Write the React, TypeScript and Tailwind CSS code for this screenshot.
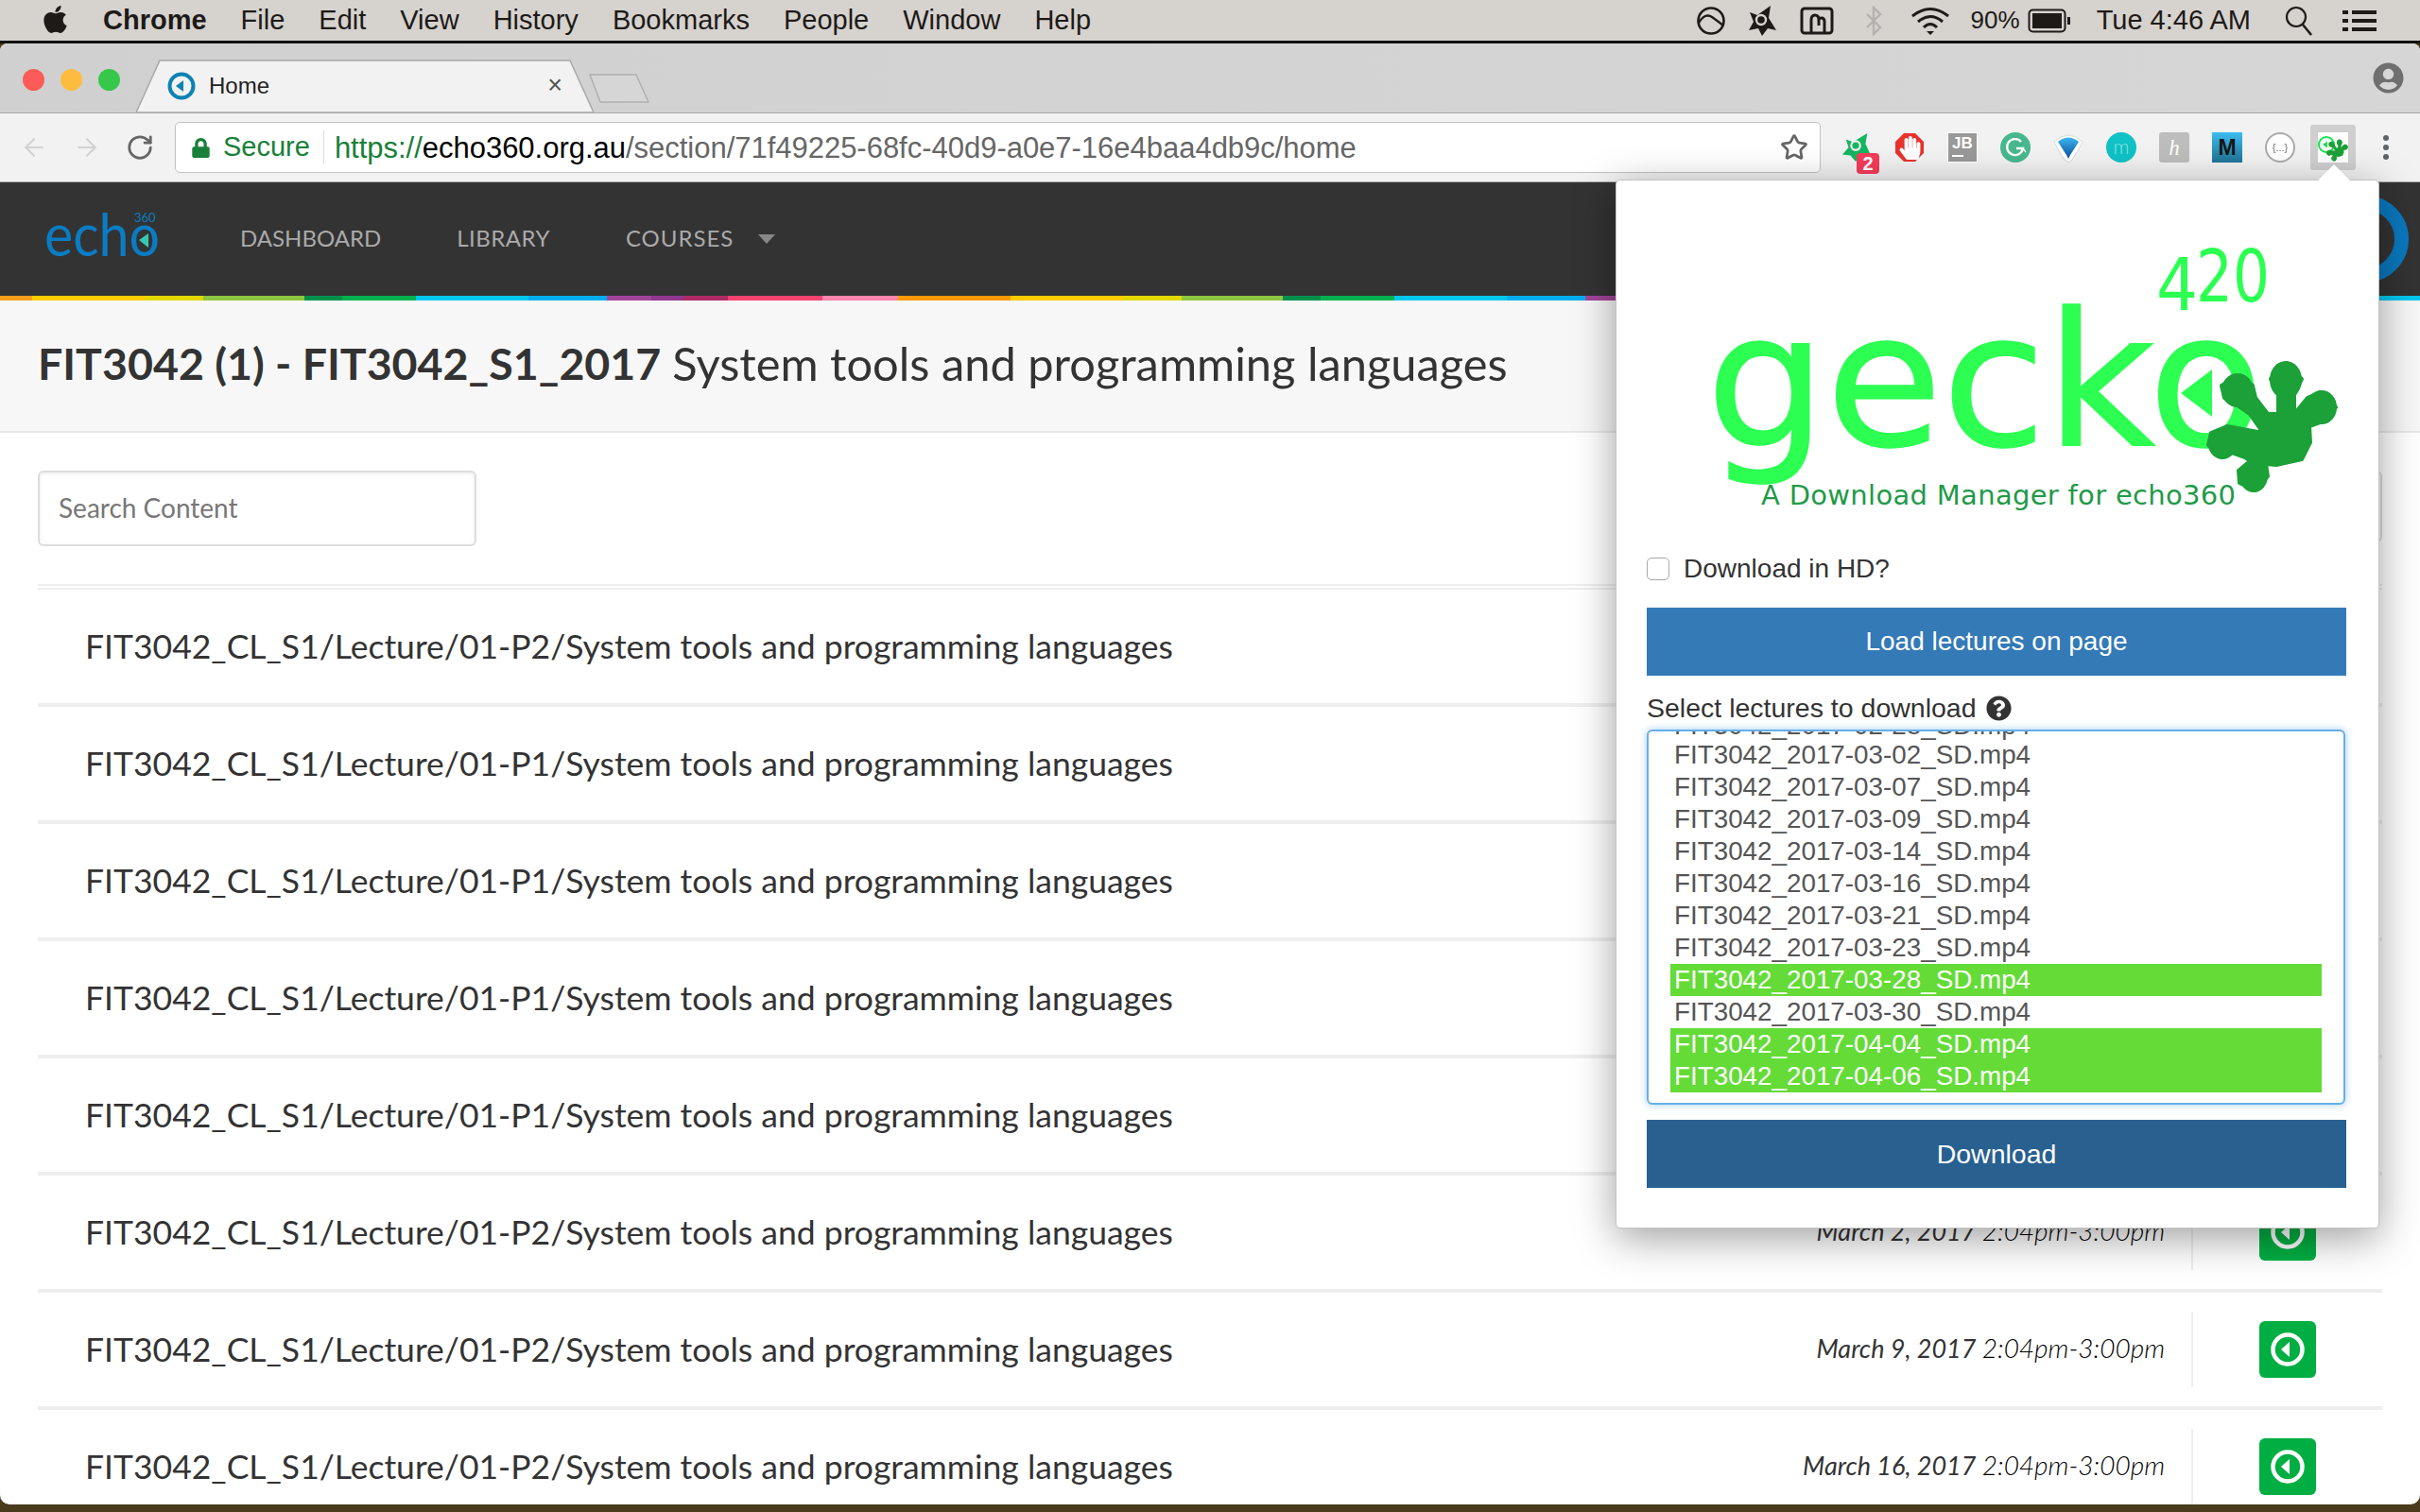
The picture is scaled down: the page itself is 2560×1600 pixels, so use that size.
import { ArrowLeft, ArrowRight, RotateCw, Star } from 'lucide-react'
import { FaApple, FaHandPaper, FaLock, FaQuestionCircle, FaUserCircle } from 'react-icons/fa'

const sans = 'font-["Liberation_Sans",Arial,sans-serif]'

const menuItems = ['File', 'Edit', 'View', 'History', 'Bookmarks', 'People', 'Window', 'Help']

const rainbow = [
  ['w-[34px]', 'bg-[#f99d1c]'],
  ['w-[120px]', 'bg-[#fecb00]'],
  ['w-[61px]', 'bg-[#e2d800]'],
  ['w-[107px]', 'bg-[#8dc63f]'],
  ['w-[40px]', 'bg-[#00904c]'],
  ['w-[78px]', 'bg-[#00b14f]'],
  ['w-[119px]', 'bg-[#00c8f0]'],
  ['w-[83px]', 'bg-[#00aeef]'],
  ['w-[47px]', 'bg-[#a2459a]'],
  ['w-[34px]', 'bg-[#93368f]'],
  ['w-[47px]', 'bg-[#ae2a64]'],
  ['w-[100px]', 'bg-[#f4436f]'],
  ['w-[80px]', 'bg-[#ff85ad]'],
  ['w-[119px]', 'bg-[#ff9900]'],
  ['w-[119px]', 'bg-[#fecb00]'],
  ['w-[62px]', 'bg-[#e2d800]'],
  ['w-[107px]', 'bg-[#8dc63f]'],
  ['w-[40px]', 'bg-[#00904c]'],
  ['w-[78px]', 'bg-[#00b14f]'],
  ['w-[119px]', 'bg-[#00c8f0]'],
  ['w-[83px]', 'bg-[#00aeef]'],
  ['w-[47px]', 'bg-[#a2459a]'],
  ['flex-1', 'bg-[#00c8f0]'],
]

const rows = [
  { part: '01-P2' },
  { part: '01-P1' },
  { part: '01-P1' },
  { part: '01-P1' },
  { part: '01-P1' },
  { part: '01-P2', date: 'March 2, 2017' },
  { part: '01-P2', date: 'March 9, 2017' },
  { part: '01-P2', date: 'March 16, 2017' },
]

const lectures = [
  { date: '2017-02-28' },
  { date: '2017-03-02' },
  { date: '2017-03-07' },
  { date: '2017-03-09' },
  { date: '2017-03-14' },
  { date: '2017-03-16' },
  { date: '2017-03-21' },
  { date: '2017-03-23' },
  { date: '2017-03-28', selected: true },
  { date: '2017-03-30' },
  { date: '2017-04-04', selected: true },
  { date: '2017-04-06', selected: true },
]

// traced from the logo, coordinates are the popup's
function GeckoFoot() {
  return (
    <g fill="#1ca038">
      <polygon
        stroke="#1ca038"
        strokeWidth="4"
        strokeLinejoin="round"
        points="709,193 725,210 717,227 717,247 731,230 744,224 761,240 747,255 733,260 734,277 725,295 698,301 687,300 689,313 676,328 659,320 658,307 670,297 665,293 651,288 640,293 626,280 629,267 646,260 662,263 684,267 670,247 657,238 643,230 640,217 657,207 673,217 676,230 689,247 700,247 700,227 692,210"
      />
      <ellipse cx="708" cy="211" rx="17" ry="20" />
      <ellipse cx="746" cy="240" rx="16" ry="18" />
      <ellipse cx="657" cy="222" rx="17" ry="18" />
      <ellipse cx="641" cy="279" rx="15" ry="16" />
      <ellipse cx="674" cy="313" rx="15" ry="17" />
    </g>
  )
}

function MenuBarIcons() {
  return (
    <div className="flex items-center">
      <svg width="30" height="30" viewBox="0 0 30 30" className="ml-[1px]">
        <circle cx="15" cy="15" r="13.5" fill="none" stroke="#1d1a18" strokeWidth="2.6" />
        <path d="M2 17 Q9 6 16 11 T28 20" fill="none" stroke="#1d1a18" strokeWidth="2.4" />
      </svg>
      <svg width="34" height="34" viewBox="0 0 34 34" className="ml-[21px]">
        <path d="M4 27 L9 18 L5 8 L13 11 L27 1 L25 14 L33 27 L24 25 L18 33 L14 25 Z" fill="#1d1a18" />
        <circle cx="17" cy="16" r="5" fill="none" stroke="#d6d2ce" strokeWidth="2.4" />
      </svg>
      <svg width="36" height="30" viewBox="0 0 36 30" className="ml-[24px]">
        <rect x="2" y="2" width="32" height="26" rx="3" fill="none" stroke="#1d1a18" strokeWidth="3" />
        <path d="M12 28 V14 Q12 9 16 9 Q20 9 20 14 V20 M20 14 Q20 12 23 12 Q26 12 26 16 V28" fill="none" stroke="#1d1a18" strokeWidth="3" />
      </svg>
      <svg width="18" height="32" viewBox="0 0 18 32" className="ml-[33px]">
        <path d="M2 9 L16 23 L9 30 V2 L16 9 L2 23" fill="none" stroke="#b4b1ae" strokeWidth="2.4" />
      </svg>
      <svg width="42" height="30" viewBox="0 0 42 30" className="ml-[30px]">
        <g fill="none" stroke="#1d1a18" strokeWidth="3">
          <path d="M2 10 Q21 -5 40 10" />
          <path d="M8 16 Q21 5 34 16" />
          <path d="M14 22 Q21 15 28 22" />
        </g>
        <path d="M17 26 H25 L21 30 Z" fill="#1d1a18" />
      </svg>
    </div>
  )
}

function ExtensionIcons() {
  return (
    <div className="ml-[22px] flex items-center gap-6">
      {/* avast with its badge */}
      <div className="relative h-8 w-8">
        <svg viewBox="0 0 34 34" className="h-8 w-8">
          <path d="M1 25 L8 17 L5 8 L13 11 L29 1 L27 13 L33 26 L22 25 L16 33 L10 26 Z" fill="#15b560" />
          <circle cx="16" cy="15" r="5" fill="none" stroke="#f2f2f2" strokeWidth="2.4" />
        </svg>
        <span className={`absolute -bottom-3 -right-2 flex h-[22px] w-6 items-center justify-center rounded-sm bg-[#f53c5b] text-[20px] font-bold leading-none text-white ${sans}`}>
          2
        </span>
      </div>
      {/* adblock */}
      <div className="relative flex h-8 w-8 items-center justify-center">
        <svg viewBox="0 0 32 32" className="absolute inset-0">
          <polygon points="10,1 22,1 31,10 31,22 22,31 10,31 1,22 1,10" fill="#e9322d" />
        </svg>
        <FaHandPaper className="relative text-[25px] text-white" />
      </div>
      {/* jetbrains */}
      <div className={`flex h-8 w-8 flex-col border border-white bg-[#999] px-[4px] pt-[2px] text-[17px] font-bold leading-[18px] text-white ${sans}`}>
        JB
        <span className="mt-[3px] h-[2px] w-[12px] bg-white" />
      </div>
      {/* grammarly */}
      <svg viewBox="0 0 32 32" className="h-8 w-8">
        <circle cx="16" cy="16" r="16" fill="#47b88d" />
        <path d="M22 10 A8.5 8.5 0 1 0 24 17 H17" fill="none" stroke="#fff" strokeWidth="2.4" />
        <path d="M22 21 L24 17 L27 21" fill="none" stroke="#fff" strokeWidth="1.5" />
      </svg>
      {/* balloon */}
      <svg viewBox="0 0 32 32" className="h-8 w-8">
        <defs>
          <linearGradient id="balloon" x1="0" y1="0" x2="0" y2="1">
            <stop offset="0" stopColor="#3db5f0" />
            <stop offset="1" stopColor="#0a4f9c" />
          </linearGradient>
        </defs>
        <path d="M1 10 Q16 -4 31 10 Q27 19 20 29 Q16 34 12 29 Q5 19 1 10 Z" fill="#fff" stroke="#cfcfcf" strokeWidth="0.8" />
        <path d="M5 10 Q16 1 27 10 Q22 18 18 24 L16 28 L14 24 Q10 18 5 10 Z" fill="url(#balloon)" />
      </svg>
      {/* mercury */}
      <div className="flex h-8 w-8 items-center justify-center rounded-full bg-[#0ec2c6] pb-[3px] font-[Lato,sans-serif] text-[21px] font-light leading-none text-[#8be4e2]">
        m
      </div>
      {/* keep */}
      <div className="flex h-8 w-8 items-center justify-center rounded-[3px] bg-[#bdbdbd] font-['Liberation_Serif',serif] text-[23px] italic leading-none text-white">
        h
      </div>
      {/* mercury reader */}
      <div className={`flex h-8 w-8 items-center justify-center bg-gradient-to-b from-[#3bbdf0] to-[#1f7396] text-[23px] font-bold leading-none text-[#161616] ${sans}`}>
        M
      </div>
      {/* json viewer */}
      <div className={`flex h-8 w-8 items-center justify-center rounded-full border-2 border-[#aaa] bg-white text-[11px] leading-none text-[#777] ${sans}`}>
        {'{...}'}
      </div>
      {/* gecko, the open one */}
      <div className="relative h-8 w-8">
        <div className="absolute -inset-2 rounded-[3px] bg-[#cfcfcf]" />
        <svg viewBox="0 0 32 32" className="absolute inset-0 bg-white">
          <circle cx="9" cy="13" r="8" fill="none" stroke="#19e34f" strokeWidth="2" />
          <polygon points="5,13 10,9.5 10,16.5" fill="#19e34f" />
          <g transform="translate(-94 -24) scale(0.165)">
            <GeckoFoot />
          </g>
        </svg>
      </div>
      <div className="ml-[13px] flex w-[8px] flex-col gap-[4px]">
        <span className="h-[6px] w-[6px] rounded-full bg-[#5f6368]" />
        <span className="h-[6px] w-[6px] rounded-full bg-[#5f6368]" />
        <span className="h-[6px] w-[6px] rounded-full bg-[#5f6368]" />
      </div>
    </div>
  )
}

function ChromeFrame() {
  return (
    <>
      <div className="relative flex h-[73px] items-end bg-gradient-to-r from-[#d0d0d0] to-[#d6d6d6]">
        <div className="mb-[23px] ml-[24px] flex gap-[17px] self-end">
          <span className="h-[23px] w-[23px] rounded-full bg-[#fc5b57]" />
          <span className="h-[23px] w-[23px] rounded-full bg-[#fdbc40]" />
          <span className="h-[23px] w-[23px] rounded-full bg-[#35c84a]" />
        </div>
        <div className="relative ml-[17px] flex h-[56px] w-[484px] items-center pl-[33px]">
          <svg viewBox="0 0 484 56" className="absolute inset-0">
            <polygon points="0,56 25,1 459,1 484,56" fill="#f2f2f2" stroke="#a8a8a8" strokeWidth="1.5" />
          </svg>
          <svg width="30" height="30" viewBox="0 0 30 30" className="relative">
            <circle cx="15" cy="15" r="12.5" fill="none" stroke="#0d82b4" strokeWidth="4" />
            <polygon points="9,15 17,9 17,21" fill="#0d82b4" />
          </svg>
          <span className={`relative ml-[14px] text-[24px] leading-none text-[#222] ${sans}`}>Home</span>
          <span className={`absolute right-[33px] top-[14px] text-[27px] leading-none text-[#555] ${sans}`}>×</span>
        </div>
        <svg width="64" height="31" viewBox="0 0 64 31" className="-ml-[5px] mb-[10px]">
          <polygon points="1,1 50,1 63,30 12,30" fill="#d6d6d6" stroke="#b0b0b0" strokeWidth="1.5" strokeLinejoin="round" />
        </svg>
        <FaUserCircle className="ml-auto mb-[20px] mr-[17px] text-[33px] text-[#6f6f6f]" />
      </div>

      <div className="flex h-[74px] items-center border-y border-y-[#a8a8a8] bg-[#f2f2f2] pl-[21px]">
        <ArrowLeft className="h-[30px] w-[30px] text-[#d2d2d2]" strokeWidth={1.7} />
        <ArrowRight className="ml-[26px] h-[30px] w-[30px] text-[#d2d2d2]" strokeWidth={1.7} />
        <RotateCw className="ml-[26px] h-[30px] w-[30px] text-[#666]" strokeWidth={2.2} />
        <div className={`ml-[22px] flex h-[54px] w-[1741px] items-center rounded-[5px] border border-[#c2c2c2] bg-white pl-[16px] pr-[12px] text-[29px] ${sans}`}>
          <FaLock className="text-[21px] text-[#188038]" />
          <span className="ml-[13px] text-[#188038]">Secure</span>
          <span className="ml-[14px] h-[36px] w-[1px] bg-[#ddd]" />
          <span className="ml-[11px] whitespace-nowrap pt-[2px] text-[31px] tracking-[-0.02px]">
            <span className="text-[#188038]">https://</span>
            <span className="text-black">echo360.org.au</span>
            <span className="text-[#666]">/section/71f49225-68fc-40d9-a0e7-16e4baa4db9c/home</span>
          </span>
          <Star className="ml-auto h-[30px] w-[30px] text-[#666]" strokeWidth={2.2} />
        </div>
        <ExtensionIcons />
      </div>
    </>
  )
}

function GeckoPopup() {
  return (
    <div className="absolute left-[1709px] top-[144px] h-[1110px] w-[808px] rounded-[5px] border border-[#c4c4c4] bg-white px-[32px] shadow-[0_10px_44px_rgba(0,0,0,0.38)]">
      <div className="absolute -top-[12px] left-[747px] h-6 w-6 rotate-45 bg-white" />
      <svg viewBox="0 0 806 375" className="relative -mx-[32px] block h-[375px] w-[806px] font-['DejaVu_Sans',sans-serif]">
        <text x="95" y="280" fontSize="196" fill="#2cff52" stroke="#2cff52" strokeWidth="1.5" textLength="590" lengthAdjust="spacingAndGlyphs">gecko</text>
        <text x="571" y="137" fontSize="76" fill="#2cff52" textLength="44" lengthAdjust="spacingAndGlyphs">4</text>
        <text x="613" y="128" fontSize="76" fill="#2cff52" textLength="78" lengthAdjust="spacingAndGlyphs">20</text>
        <polygon points="597,225 630,200 630,250" fill="#2cff52" />
        <GeckoFoot />
        <text x="153" y="343" fontSize="29" fill="#1f9a48" textLength="502">A Download Manager for echo360</text>
      </svg>

      <div className={`text-[28px] text-[#333] ${sans}`}>
        <label className="mt-[22px] flex h-[28px] items-center">
          <span className="h-[24px] w-[24px] rounded-[5px] border border-[#a9a9a9] bg-white" />
          <span className="ml-[15px] leading-none">Download in HD?</span>
        </label>

        <div className="mt-[27px] flex h-[72px] w-[740px] items-center justify-center bg-[#337ab7] text-white">
          Load lectures on page
        </div>

        <div className="mt-[19px] flex h-[30px] items-center text-[28.5px]">
          Select lectures to download
          <FaQuestionCircle className="ml-[10px] text-[27px] text-[#333]" />
        </div>

        <div className="mt-[8px] h-[397px] w-[739px] overflow-hidden rounded-[6px] border-2 border-[#66afe9] bg-white pl-[23px] pr-[23px] text-[27.8px] shadow-[0_0_8px_rgba(102,175,233,0.6)]">
          <div className="-mt-[23px]">
            {lectures.map((lecture, i) => (
              <div
                key={lecture.date}
                className={`pl-[4px] leading-[34px] ${i === 0 ? 'h-[31px]' : 'h-[34px]'} ${lecture.selected ? 'bg-[#64db37] text-white' : 'text-[#555]'}`}
              >
                FIT3042_{lecture.date}_SD.mp4
              </div>
            ))}
          </div>
        </div>

        <div className="mt-[16px] flex h-[72px] w-[740px] items-center justify-center bg-[#286090] text-[28.5px] text-white">
          Download
        </div>
      </div>
    </div>
  )
}

function LectureRow({ part, date }: { part: string; date?: string }) {
  return (
    <div className="flex h-[124px] shrink-0 items-center border-b-4 border-[#eee]">
      <div className="flex-1 whitespace-nowrap pl-[50px] text-[35.5px] text-[#333]">
        FIT3042_CL_S1/Lecture/{part}/System tools and programming languages
      </div>
      {date && (
        <>
          <div className="mr-[28px] whitespace-nowrap pb-[3px] text-[27px] italic text-[#333]">
            {date} <span className="text-[28px] font-light text-black">2:04pm-3:00pm</span>
          </div>
          <div className="h-20 w-[2px] bg-[#eee]" />
          <div className="flex w-[200px] justify-center">
            <div className="flex h-[60px] w-[60px] items-center justify-center rounded-md bg-[#00ae42]">
              <svg width="36" height="36" viewBox="0 0 36 36">
                <circle cx="18" cy="18" r="15.5" fill="none" stroke="#fff" strokeWidth="4.5" />
                <polygon points="11,18 20,10 20,26" fill="#fff" />
              </svg>
            </div>
          </div>
        </>
      )}
    </div>
  )
}

export default function App() {
  return (
    <div className="flex h-[1600px] w-[2560px] flex-col overflow-hidden bg-[#4a3b1c]">
      <div className={`flex h-[46px] shrink-0 items-center border-b-[3px] border-[#111] bg-[#d6d2ce] pl-[42px] pr-[46px] text-[29px] text-[#1d1a18] ${sans}`}>
        <FaApple className="mb-[3px] text-[33px] text-[#1d1a18]" />
        <span className="ml-[34px] font-bold">Chrome</span>
        <div className="ml-[36px] flex gap-[36px]">
          {menuItems.map((item) => (
            <span key={item}>{item}</span>
          ))}
        </div>
        <div className="ml-auto flex items-center">
          <MenuBarIcons />
          <span className="ml-[22px] text-[26px]">90%</span>
          <svg width="46" height="26" viewBox="0 0 46 26" className="ml-[8px]">
            <rect x="1.5" y="1.5" width="38" height="23" rx="4" fill="none" stroke="#1d1a18" strokeWidth="2" />
            <rect x="5" y="5" width="31" height="16" fill="#1d1a18" />
            <rect x="42" y="9" width="3" height="8" fill="#1d1a18" />
          </svg>
          <span className="ml-[27px]">Tue 4:46 AM</span>
          <svg width="30" height="32" viewBox="0 0 30 32" className="ml-[36px]">
            <circle cx="12" cy="12" r="10" fill="none" stroke="#1d1a18" strokeWidth="2.2" />
            <path d="M19 20 L28 31" stroke="#1d1a18" strokeWidth="2.6" />
          </svg>
          <svg width="36" height="24" viewBox="0 0 36 24" className="ml-[31px]">
            <g fill="#1d1a18">
              <rect x="0" y="1" width="6" height="4" />
              <rect x="10" y="1" width="26" height="4" />
              <rect x="0" y="10" width="6" height="4" />
              <rect x="10" y="10" width="26" height="4" />
              <rect x="0" y="19" width="6" height="4" />
              <rect x="10" y="19" width="26" height="4" />
            </g>
          </svg>
        </div>
      </div>

      <div className="relative flex h-[1546px] shrink-0 flex-col rounded-t-[8px] rounded-b-[10px] bg-white font-[Lato,sans-serif]">
        <div className="flex shrink-0 flex-col overflow-hidden rounded-t-[8px]">
          <ChromeFrame />
        </div>

        <div className="flex h-[120px] shrink-0 items-center bg-[#333] pl-[47px] text-[24px] text-[#aaa]">
          <svg width="124" height="70" viewBox="0 0 124 70" className="font-[Lato,sans-serif]">
            <text x="0" y="53" fontSize="62" fill="#0a7cc4" textLength="122" lengthAdjust="spacingAndGlyphs">echo</text>
            <polygon points="100,36 110,29 110,44" fill="#38c7b5" />
            <text x="95" y="17" fontSize="13" fill="#0a7cc4">360</text>
          </svg>
          <span className="mb-[2px] ml-[83px]">DASHBOARD</span>
          <span className="mb-[2px] ml-[80px] tracking-[0.5px]">LIBRARY</span>
          <span className="mb-[2px] ml-[80px] tracking-[1px]">COURSES</span>
          <span className="ml-[26px] h-0 w-0 border-x-[9px] border-t-[10px] border-x-transparent border-t-[#888]" />
          <span className="ml-auto mr-[12px] h-[92px] w-[92px] rounded-full border-[15px] border-[#0a78bf]" />
        </div>

        <div className="flex h-[5px] shrink-0">
          {rainbow.map(([width, color], i) => (
            <span key={i} className={`${width} ${color}`} />
          ))}
        </div>

        <div className="flex h-[140px] shrink-0 items-center border-b-2 border-[#e8e8e8] bg-[#f7f7f7] pb-[4px] pl-[40px] text-[#333]">
          <span className="text-[46.5px] font-bold">FIT3042 (1) - FIT3042_S1_2017</span>
          <span className="ml-[12px] text-[48.8px]">System tools and programming languages</span>
        </div>

        <div className="flex min-h-0 flex-1 flex-col overflow-hidden rounded-b-[10px] px-[40px] pt-[40px]">
          <div className="flex shrink-0 justify-between">
            <div className="flex h-[80px] w-[464px] items-center rounded-md border-2 border-[#ddd] pb-[2px] pl-[20px] text-[28px] text-[#777] shadow-[inset_0_1px_4px_rgba(0,0,0,0.08)]">
              Search Content
            </div>
            <div className="h-[76px] w-[200px] rounded-md border-2 border-[#ddd]" />
          </div>
          <div className="mt-[40px] h-[2px] shrink-0 bg-[#eee]" />
          <div className="mt-[2px] shrink-0 border-t-2 border-[#eee]" />
          {rows.map((row, i) => (
            <LectureRow key={i} part={row.part} date={row.date} />
          ))}
        </div>

        <GeckoPopup />
      </div>
    </div>
  )
}
